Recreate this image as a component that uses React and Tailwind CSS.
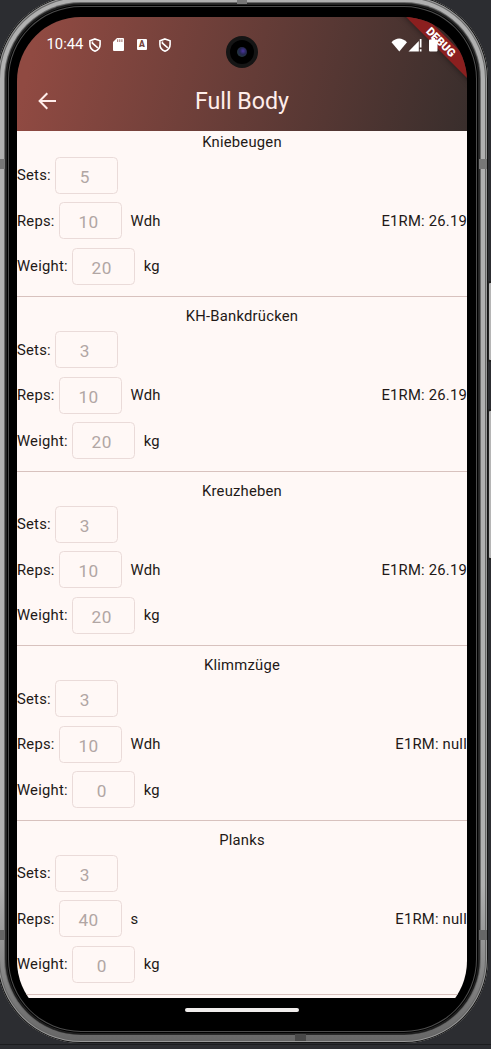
import React from "react";

const exercises = [
  { name: "Kniebeugen", sets: 5, reps: 10, unit: "Wdh", weight: 20, max: "26.19" },
  { name: "KH-Bankdrücken", sets: 3, reps: 10, unit: "Wdh", weight: 20, max: "26.19" },
  { name: "Kreuzheben", sets: 3, reps: 10, unit: "Wdh", weight: 20, max: "26.19" },
  { name: "Klimmzüge", sets: 3, reps: 10, unit: "Wdh", weight: 0, max: "null" },
  { name: "Planks", sets: 3, reps: 40, unit: "s", weight: 0, max: "null" },
];

function Shield() {
  return (
    <svg width="12" height="14" viewBox="0 0 12 14" fill="none" stroke="#fff" strokeWidth="1.6">
      <path d="M6 .9 11.1 2.8V6.6C11.1 9.8 9 12.2 6 13.2 3 12.2.9 9.8.9 6.6V2.8Z" />
      <path d="M3.4 3.4V5.2L8.8 9.8" />
    </svg>
  );
}

function SdCard() {
  return (
    <svg width="11" height="13" viewBox="0 0 11 13">
      <path fill="#fff" d="M4 0H10Q11 0 11 1V12Q11 13 10 13H1Q0 13 0 12V4Z" />
      <path stroke="#83453f" strokeWidth=".8" d="M4.7 1.3V4M6.8 1.3V4M8.9 1.3V4" />
    </svg>
  );
}

function LetterBox() {
  return (
    <span className="flex h-[11px] w-[10px] items-center justify-center rounded-[1px] bg-white text-[8.5px] leading-none font-black text-[#75423b]">
      A
    </span>
  );
}

function StatusBar() {
  return (
    <div className="relative z-10 flex h-[55px] items-center pl-[29.5px] pr-[29px] text-white">
      <span className="w-[42.5px] text-[14.8px] leading-none">10:44</span>
      <Shield />
      <span className="ml-[12px]"><SdCard /></span>
      <span className="ml-[13px]"><LetterBox /></span>
      <span className="ml-[12px]"><Shield /></span>
      <svg className="ml-auto" width="47" height="14" viewBox="0 0 47 14" fill="#fff">
        <path d="M.5 4.2Q8-3.2 16 4.2L8.3 13.5Z" />
        <path d="M17.5 13.5 27.8 3V13.5Z" />
        <path d="M28.8 1H30.5V9.5H28.8ZM28.8 11.3H30.5V13.5H28.8Z" />
        <path d="M40.5 0H44V1.5H45.5Q46.5 1.5 46.5 2.5V12.5Q46.5 13.5 45.5 13.5H39Q38 13.5 38 12.5V2.5Q38 1.5 39 1.5H40.5Z" />
      </svg>
    </div>
  );
}

function Field({ label, value, unit, children }) {
  return (
    <div className="flex h-[45.5px] items-center">
      <span>{label}:</span>
      <span className="ml-[4px] flex h-[37px] w-[63px] items-center justify-center rounded-[4.5px] border border-[#eadbd9] pt-[3px] pr-[3px] text-[17.2px] tracking-[0.5px] text-[#b1a6a4]">
        {value}
      </span>
      {unit && <span className="ml-[9px]">{unit}</span>}
      {children}
    </div>
  );
}

function Exercise({ item }) {
  return (
    <section className="h-[174.4px] text-[14.8px] leading-[22px] tracking-[0.22px] text-[#231917]">
      <h2 className="h-[21.7px] text-center">{item.name}</h2>
      <Field label="Sets" value={item.sets} />
      <Field label="Reps" value={item.reps} unit={item.unit}>
        <span className="ml-auto">E1RM: {item.max}</span>
      </Field>
      <Field label="Weight" value={item.weight} unit="kg" />
      <div className="mt-[7.3px] h-px bg-[#d8c2be]" />
    </section>
  );
}

export default function App() {
  return (
    <div className="relative h-[1049px] w-[491px] overflow-hidden bg-[#2c2d31] font-['Roboto',sans-serif]">
      <div className="absolute top-[1044px] left-0 h-px w-full bg-[#1b1c1e]" />
      <div className="absolute top-[281px] left-[487px] h-[81px] w-[8px] rounded-[3px] border-2 border-[#222] bg-[#b5b5b5]" />
      <div className="absolute top-[409px] left-[487px] h-[151px] w-[8px] rounded-[3px] border-2 border-[#222] bg-[#b5b5b5]" />

      <div className="relative -mt-[5px] ml-[-3px] h-[1048px] w-[491px] rounded-[84px] bg-linear-to-b from-[#b0b0b0] from-85% to-[#666] p-[9px] shadow-[inset_0_0_0_1px_#151515,inset_0_0_0_2px_#999,inset_0_0_0_3px_#666]">
        <div className="absolute top-0 left-[240px] h-[9px] w-[10px] bg-[#777]" />
        <div className="absolute top-[1039px] left-[298px] h-[7px] w-[11px] bg-[#484848]" />
        <div className="absolute top-[164px] left-[3px] h-[10px] w-[5px] bg-[#777]" />
        <div className="absolute top-[164px] left-[482px] h-[10px] w-[8px] bg-[#777]" />
        <div className="absolute top-[935px] left-[3px] h-[10px] w-[5px] bg-[#666]" />
        <div className="absolute top-[935px] left-[482px] h-[10px] w-[8px] bg-[#666]" />

        <div className="h-full rounded-[75px] bg-black px-[11px] pt-[13px] pb-[12px] shadow-[0_0_0_1px_#2a2a2a,0_0_0_2px_#6a6a6a,inset_0_0_0_1px_#222,inset_0_0_0_2px_#000,inset_0_0_0_3px_#4c4c4c]">
          <div className="relative flex h-[1008px] w-[450px] flex-col overflow-hidden rounded-[64px]">
            <header className="h-[114px] shrink-0 bg-linear-[104deg,#904a42_0%,#904a42_5%,#392e2c_100%]">
              <StatusBar />
              <div className="flex h-[58px] items-center pl-[20.5px]">
                <svg width="18" height="18" viewBox="0 0 18 18" fill="none" stroke="#ffedea" strokeWidth="2">
                  <path d="M18 9H2.4M9.3 1.2 1.6 9l7.7 7.8" />
                </svg>
                <h1 className="mr-[38.5px] flex-1 pt-[2px] text-center text-[23.2px] leading-none text-[#ffedea]">Full Body</h1>
              </div>
            </header>

            <main className="h-[867px] shrink-0 overflow-hidden bg-[#fff8f6]">
              {exercises.map((item) => (
                <Exercise key={item.name} item={item} />
              ))}
            </main>

            <div className="flex flex-1 justify-center bg-black pt-[10px]">
              <div className="h-[4px] w-[114px] rounded-full bg-[#f0edec]" />
            </div>

            <div className="absolute top-[19px] left-[209px] flex h-[32px] w-[32px] items-center justify-center rounded-full bg-[#151515]">
              <div className="flex h-[24px] w-[24px] items-center justify-center rounded-full bg-black">
                <div className="h-[10px] w-[10px] rounded-full bg-[radial-gradient(circle_at_60%_40%,#4a35a0_0%,#25254f_40%,#22353c_70%,#111_100%)]" />
              </div>
            </div>
            <div className="absolute top-[18px] left-[374px] flex h-[14px] w-[100px] rotate-45 items-center justify-center bg-[#8b1f1f] pt-px text-[11.3px] leading-none font-black text-white shadow-[0_0_6px_rgba(0,0,0,0.5)]">
              DEBUG
            </div>
          </div>
        </div>
      </div>
    </div>
  );
}
